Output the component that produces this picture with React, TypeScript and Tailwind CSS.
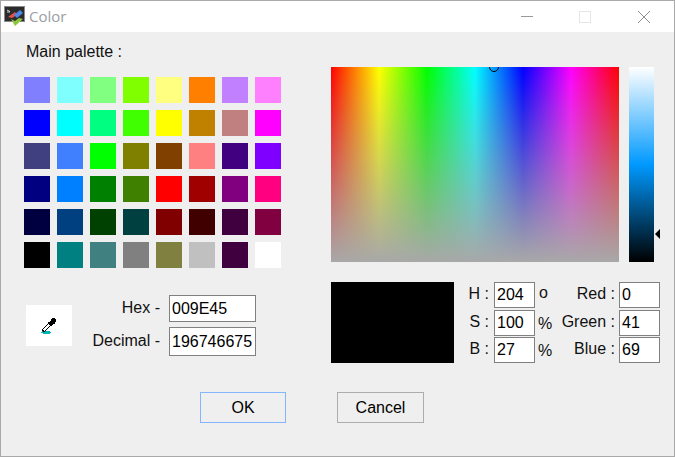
const palette = [
  ["#8080ff", "#80ffff", "#80ff80", "#80ff00", "#ffff80", "#ff8000", "#c080ff", "#ff80ff"],
  ["#0000ff", "#00ffff", "#00ff80", "#40ff00", "#ffff00", "#c08000", "#c08080", "#ff00ff"],
  ["#404080", "#4080ff", "#00ff00", "#808000", "#804000", "#ff8080", "#400080", "#8000ff"],
  ["#000080", "#0080ff", "#008000", "#408000", "#ff0000", "#a00000", "#800080", "#ff0080"],
  ["#000040", "#004080", "#004000", "#004040", "#800000", "#400000", "#400040", "#800040"],
  ["#000000", "#008080", "#408080", "#808080", "#808040", "#c0c0c0", "#400040", "#ffffff"],
];

const hsbRows = [
  { label: "H :", value: "204", unit: "o", unitClass: "pl-[4px] pt-[3px]", channel: "Red :", channelValue: "0" },
  { label: "S :", value: "100", unit: "%", unitClass: "pl-[3px] pt-[6px]", channel: "Green :", channelValue: "41" },
  { label: "B :", value: "27", unit: "%", unitClass: "pl-[3px] pt-[6px]", channel: "Blue :", channelValue: "69" },
];

function AppIcon() {
  return (
    <svg width="22" height="22" viewBox="0 0 22 22" className="shrink-0">
      <rect x="0.5" y="0.5" width="20" height="15" fill="#2b2b2b" stroke="#8a8a8a" />
      <path d="M3 4l3 1.5M3 6h3" stroke="#d0d0d0" strokeWidth="1" />
      <path d="M4 11l7-5 2 3-5 3z" fill="#e0524d" />
      <path d="M10 9l6-5 3 3-6 5z" fill="#4f86e8" />
      <path d="M7 13l4 7 8-7-4-1-4 3z" fill="#8fc63f" />
    </svg>
  );
}

function Eyedropper() {
  return (
    <svg width="18" height="18" viewBox="0 0 18 18" shapeRendering="crispEdges">
      <path d="M2 14h8v1h1v1h-1v1H3v-1H1v-1h1z" fill="#00b4b4" />
      <path d="M12 1h3v1h1v3h-1v2h-2v1h-1v1h-1V8h-1V7H9V6H8V5h2V4h1V2h1z" fill="#000" />
      <path d="M8 6h1v1h1v1h1v1h-1v1H9v1H8v1H7v1H6v1H5v1H3v-1H2v-2h1v-1h1v-1h1V9h1V8h1V7h1z" fill="#000" />
      <path d="M8 7h1v1h1v1H9v1H8v1H7v1H6v1H5v1H4v-1H3v-1h1v-1h1v-1h1V9h1V8h1z" fill="#fff" />
    </svg>
  );
}

function Field({ value, className }: { value: string; className: string }) {
  return (
    <div className={`flex items-center border border-[#808080] bg-white pl-[2px] text-black ${className}`}>
      {value}
    </div>
  );
}

function DialogButton({ label, className }: { label: string; className: string }) {
  return (
    <button className={`h-[31px] border bg-[#efefef] text-black ${className}`}>
      {label}
    </button>
  );
}

export default function App() {
  return (
    <div className="flex h-[457px] w-[675px] flex-col overflow-hidden border border-[#a9a9a9] bg-[#efefef] font-['Liberation_Sans',sans-serif] text-[16px] leading-none text-[#111]">
      {/* title bar */}
      <div className="flex h-[31px] shrink-0 items-center bg-white pl-[3px]">
        <AppIcon />
        <span className="ml-[3px] font-['Open_Sans',sans-serif] text-[15px] text-[#9a9da3]">Color</span>
        <div className="ml-auto flex items-center pr-[24px]">
          <div className="h-px w-[12px] bg-[#9a9a9a]" />
          <div className="ml-[46px] h-[12px] w-[12px] border border-[#e6e6e6]" />
          <svg width="12" height="12" viewBox="0 0 12 12" className="ml-[47px]">
            <path d="M0 0l12 12M12 0L0 12" stroke="#8f8f8f" strokeWidth="1" fill="none" />
          </svg>
        </div>
      </div>

      <div className="flex">
        {/* left side: palette and hex values */}
        <div className="w-[330px] shrink-0 pl-[23px]">
          <div className="ml-[2px] mt-[12px] h-[16px]">Main palette :</div>
          <div className="mt-[17px] grid w-fit grid-cols-[repeat(8,26px)] gap-[7px]">
            {palette.flat().map((color, i) => (
              <div key={i} className="h-[26px] w-[26px]" style={{ backgroundColor: color }} />
            ))}
          </div>
          <div className="mt-[27px] flex items-center pl-[2px]">
            <div className="flex h-[41px] w-[46px] items-center justify-center bg-white">
              <Eyedropper />
            </div>
            <div className="ml-[18px] grid grid-cols-[70px_87px] grid-rows-[27px_29px] items-center gap-x-[9px] gap-y-[5px]">
              <span className="-translate-y-px text-right">Hex -</span>
              <Field value="009E45" className="h-[27px]" />
              <span className="-translate-y-px whitespace-nowrap text-right">Decimal -</span>
              <Field value="196746675" className="h-[29px]" />
            </div>
          </div>
        </div>

        {/* right side: gradient picker and color fields */}
        <div className="pt-[35px]">
          <div className="flex">
            <div className="relative h-[195px] w-[288px] overflow-hidden bg-[linear-gradient(to_bottom,rgba(168,168,168,0),#a8a8a8),linear-gradient(to_right,#f00,#ff0,#0f0,#0ff,#00f,#f0f,#f00)]">
              <div className="absolute left-[158px] top-[-5px] h-[10px] w-[10px] rounded-full border border-black" />
            </div>
            <div className="relative ml-[10px] h-[195px] w-[25px] bg-[linear-gradient(to_bottom,#fff,#0099ff_50%,#000)]">
              <div className="absolute left-[26px] top-[162px] h-0 w-0 border-y-[5px] border-r-[5px] border-y-transparent border-r-black" />
            </div>
          </div>

          <div className="mt-[20px] flex">
            <div className="h-[81px] w-[123px] bg-black" />
            <div className="ml-[14px] grid grid-cols-[26px_41px_16px_68px_41px] grid-rows-[28px_27px_26px]">
              {hsbRows.map((row) => (
                <div key={row.label} className="contents">
                  <span className="whitespace-nowrap pr-[5px] pt-[4px] text-right">{row.label}</span>
                  <Field value={row.value} className="h-[26px]" />
                  <span className={row.unitClass}>{row.unit}</span>
                  <span className="whitespace-nowrap pr-[4px] pt-[4px] text-right">{row.channel}</span>
                  <Field value={row.channelValue} className="h-[26px]" />
                </div>
              ))}
            </div>
          </div>
        </div>
      </div>

      <div className="mt-[29px] flex gap-[51px] pl-[199px]">
        <DialogButton label="OK" className="w-[86px] border-[#85b5ff]" />
        <DialogButton label="Cancel" className="w-[87px] border-[#adadad]" />
      </div>
    </div>
  );
}
